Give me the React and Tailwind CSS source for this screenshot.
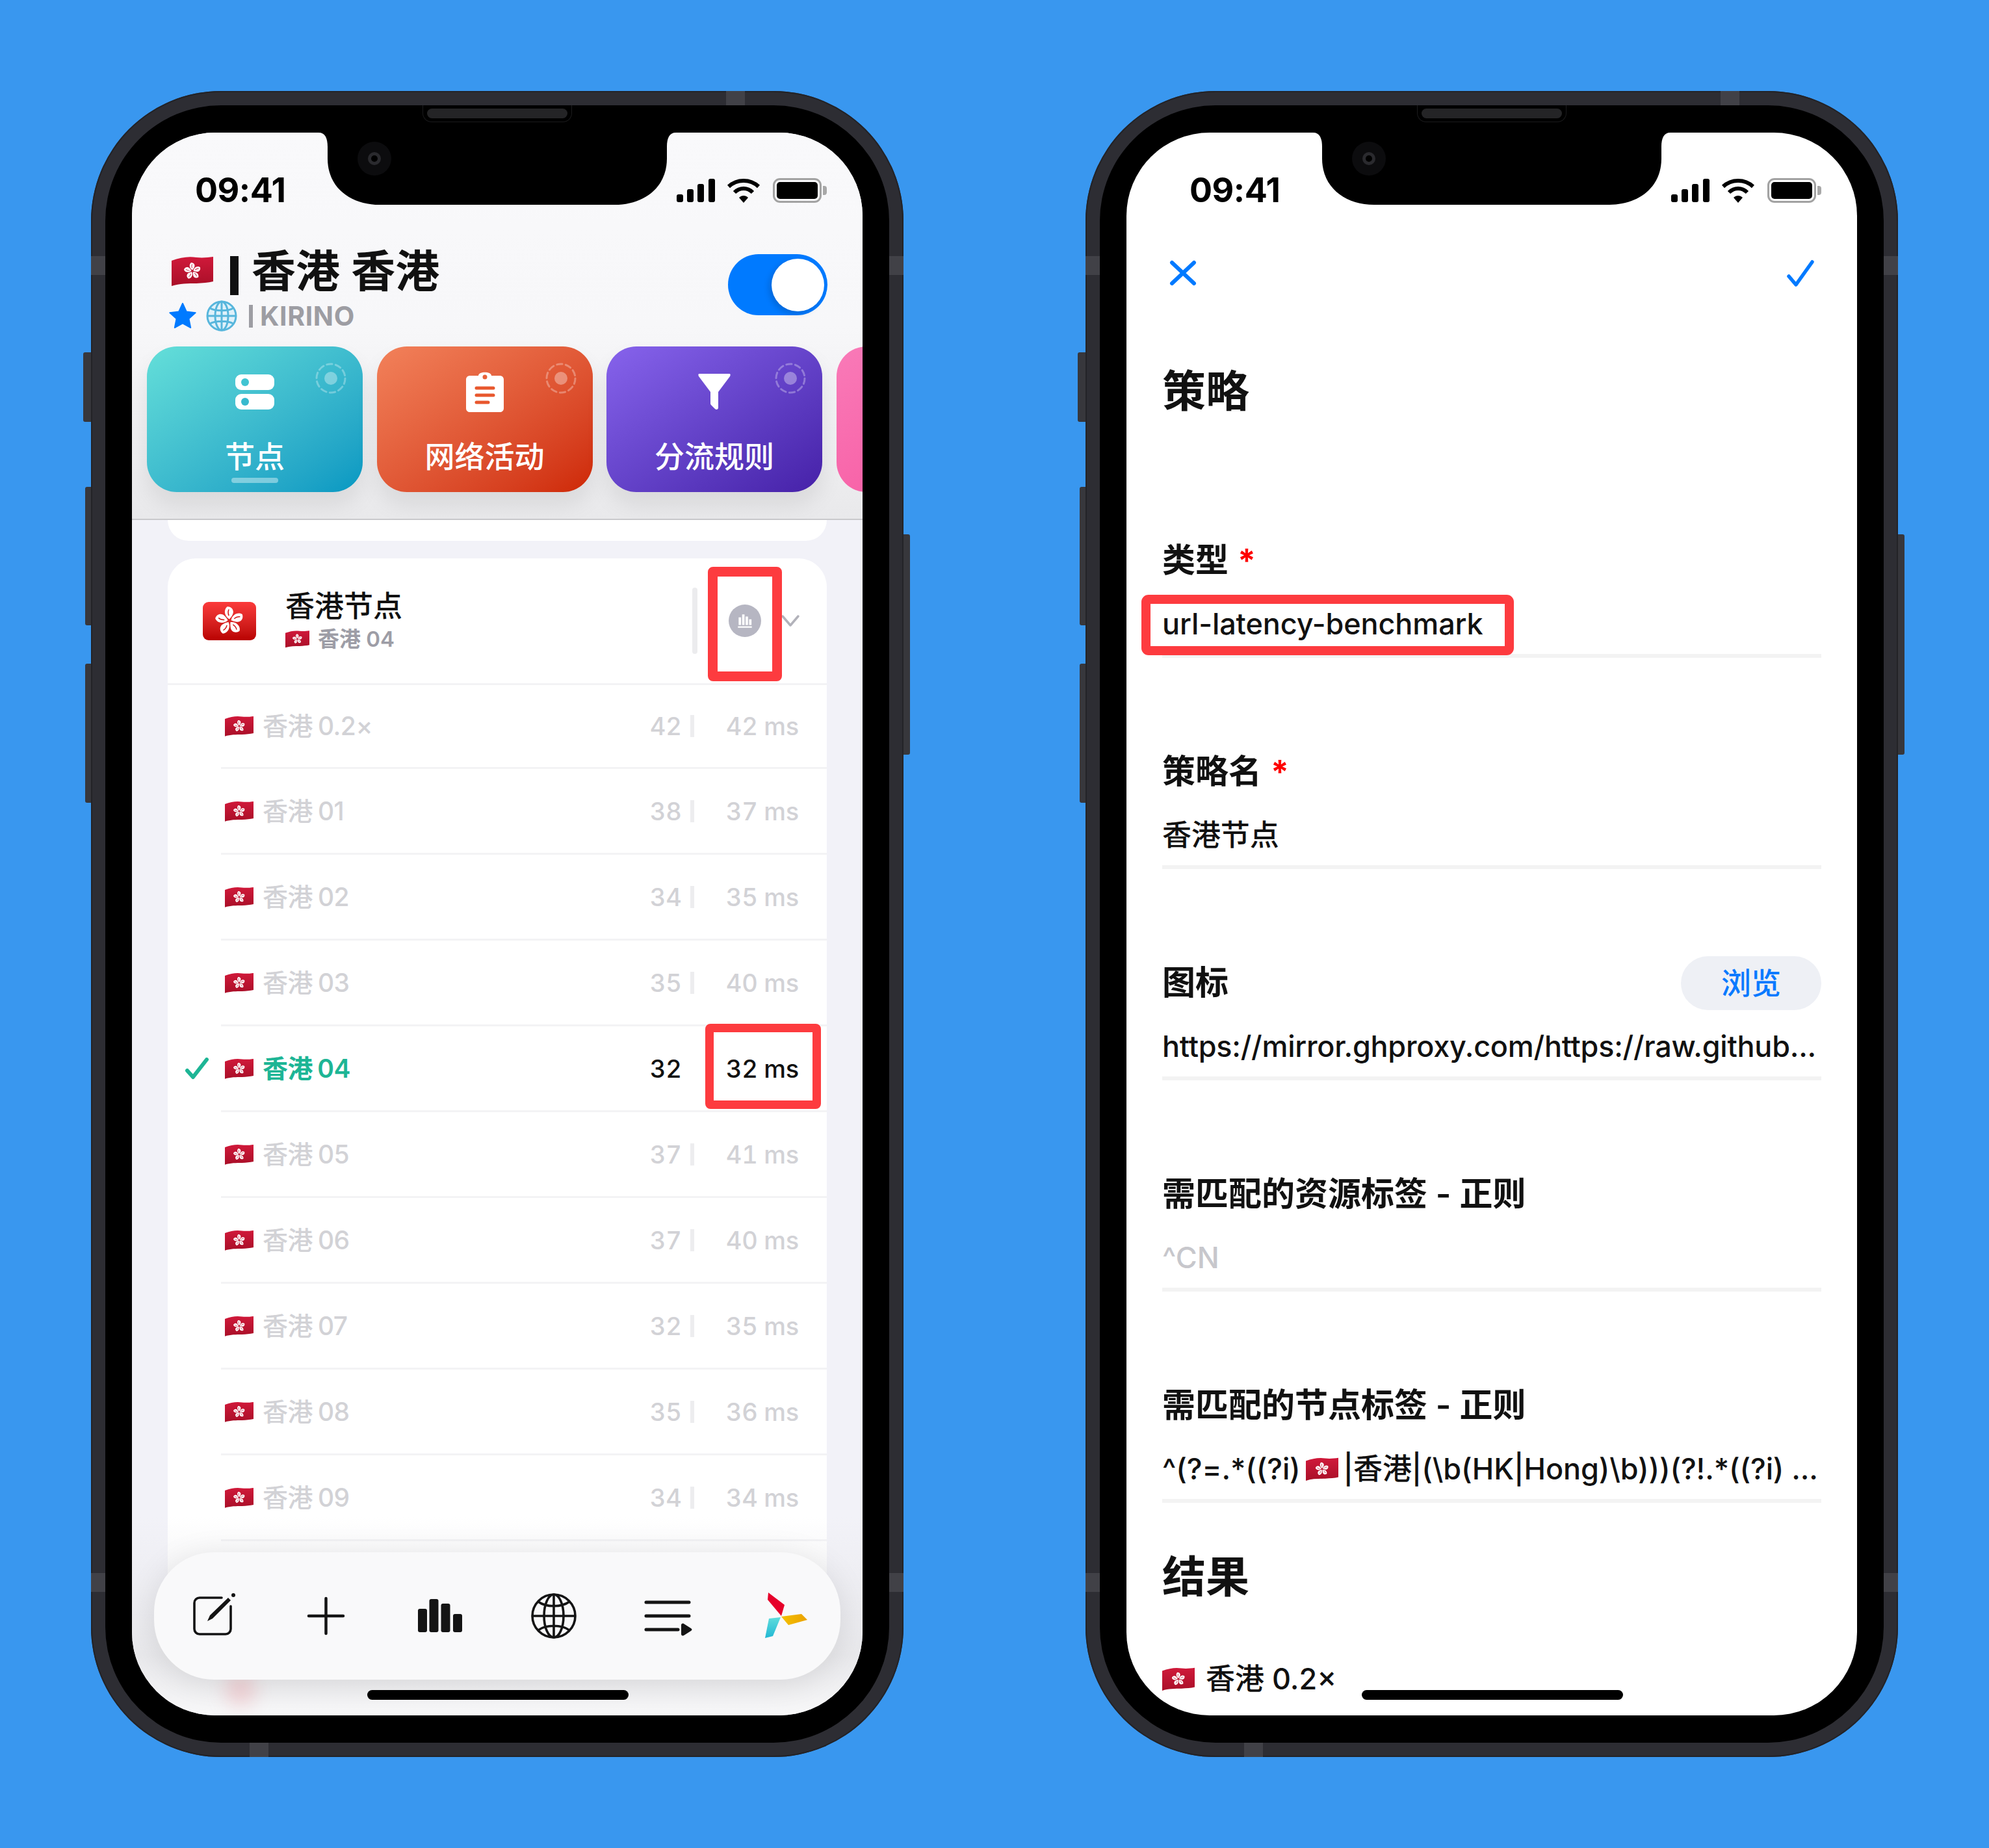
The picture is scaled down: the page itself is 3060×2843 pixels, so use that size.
import { useId } from 'react';

const ROWS = [
  ['香港 0.2×', 42, 42],
  ['香港 01', 38, 37],
  ['香港 02', 34, 35],
  ['香港 03', 35, 40],
  ['香港 04', 32, 32],
  ['香港 05', 37, 41],
  ['香港 06', 37, 40],
  ['香港 07', 32, 35],
  ['香港 08', 35, 36],
  ['香港 09', 34, 34],
  ['香港 10', 36, 38],
];

function Bauhinia({ cx, cy, r, mark = '#c21232' }) {
  return (
    <g transform={`translate(${cx} ${cy}) scale(${r / 10})`}>
      {[0, 72, 144, 216, 288].map(a => (
        <g key={a} transform={`rotate(${a})`}>
          <path d="M0 -1.200C-3.200 -2.800 -4.600 -7.400 -1.600 -10C1.600 -10.200 3.600 -7.200 2.300 -4.600C1.700 -3.200 0.800 -2.100 0 -1.200Z" fill="#fff" />
          <path d="M-0.400 -3.600Q-1.400 -6 -0.400 -8" fill="none" stroke={mark} strokeWidth="0.7" />
        </g>
      ))}
    </g>
  );
}

function Flag({ className }) {
  const id = useId();
  return (
    <svg viewBox="0 0 64 46" className={className}>
      <defs>
        <linearGradient id={id} x1="0" y1="0" x2="0" y2="1">
          <stop offset="0" stopColor="#d0193a" />
          <stop offset="1" stopColor="#a90f28" />
        </linearGradient>
      </defs>
      <path d="M0 7C14 2 26 0 38 2C48 3 56 2 64 1V39C56 41 48 41 38 42C26 42 12 42 0 46Z" fill={`url(#${id})`} />
      <Bauhinia cx={32} cy={23} r={13} />
    </svg>
  );
}

function StatusBar() {
  return (
    <div className="flex h-[38px] items-center justify-between pr-[55px] pl-[97px]">
      <span className="text-[52px] leading-[38px] font-bold tracking-[-0.5px] text-black">09:41</span>
      <div className="flex items-center">
        <svg viewBox="0 0 59 36" className="h-[36px] w-[59px]">
          <rect x="0" y="24" width="10" height="12" rx="3" />
          <rect x="16" y="16" width="10" height="20" rx="3" />
          <rect x="32" y="8" width="10" height="28" rx="3" />
          <rect x="49" y="0" width="10" height="36" rx="3" />
        </svg>
        <svg viewBox="0 0 52 37" className="ml-[18px] h-[37px] w-[52px]">
          <path d="M3 12C16 0 36 0 49 12" fill="none" stroke="#000" strokeWidth="6" />
          <path d="M12 21C20 13 32 13 40 21" fill="none" stroke="#000" strokeWidth="6" />
          <path d="M19 29C23 25 29 25 33 29L26 37Z" />
        </svg>
        <div className="ml-[19px] h-[38px] w-[75px] rounded-[11px] border-[3px] border-[#a2a2a2] p-[3px]">
          <div className="h-full w-full rounded-[5px] bg-black" />
        </div>
        <div className="ml-[2px] h-[14px] w-[6px] rounded-r-[4px] bg-[#a8a8a8]" />
      </div>
    </div>
  );
}

function Phone({ children }) {
  return (
    <div className="relative h-[2563px] w-[1250px] shrink-0 rounded-[200px] bg-[#2d2d33] p-[22px] shadow-[inset_0_0_0_2px_#232327]">
      {/* side buttons */}
      <div className="absolute top-[402px] -left-[12px] h-[107px] w-[12px] rounded-l-[3px] bg-[#37373c]" />
      <div className="absolute top-[609px] -left-[9px] h-[213px] w-[9px] rounded-l-[3px] bg-[#37373c]" />
      <div className="absolute top-[881px] -left-[9px] h-[214px] w-[9px] rounded-l-[3px] bg-[#37373c]" />
      <div className="absolute top-[682px] -right-[10px] h-[339px] w-[10px] rounded-r-[3px] bg-[#37373c]" />
      {/* antenna bands */}
      <div className="absolute top-0 left-[977px] h-[22px] w-[29px] bg-[#414147]" />
      <div className="absolute bottom-0 left-[244px] h-[22px] w-[29px] bg-[#414147]" />
      <div className="absolute top-[254px] left-0 h-[29px] w-[22px] bg-[#414147]" />
      <div className="absolute top-[254px] right-0 h-[29px] w-[22px] bg-[#414147]" />
      <div className="absolute top-[2280px] left-0 h-[29px] w-[22px] bg-[#414147]" />
      <div className="absolute top-[2280px] right-0 h-[29px] w-[22px] bg-[#414147]" />

      <div className="h-full w-full rounded-[178px] bg-black px-[41px] py-[42px]">
        <div className="relative h-[2435px] w-[1124px] overflow-hidden rounded-[128px] [font-family:Inter,'Noto_Sans_CJK_SC',sans-serif]">
          {children}
          <svg viewBox="0 0 550 111" className="absolute top-0 left-[287px] h-[111px] w-[550px]">
            <path d="M0 0H550C540 0 536 8 536 22V40C536 85 500 111 456 111H94C50 111 14 85 14 40V22C14 8 10 0 0 0Z" fill="#000" />
          </svg>
          <div className="absolute top-[2396px] left-[362px] h-[15px] w-[402px] rounded-[8px] bg-black" />
        </div>
      </div>

      {/* speaker and camera */}
      <div className="absolute top-[22px] left-[510px] flex h-[26px] w-[230px] justify-center rounded-b-[14px] border-x border-b border-[#1b1b1d] bg-black pt-[5px]">
        <div className="h-[15px] w-[216px] rounded-[8px] bg-[#242426]" />
      </div>
      <div className="absolute top-[78px] left-[410px] flex h-[52px] w-[52px] items-center justify-center rounded-full bg-[#0c0c0e]">
        <div className="h-[20px] w-[20px] rounded-full bg-[#2a2a2e] p-[5px]">
          <div className="h-[10px] w-[10px] rounded-full bg-black" />
        </div>
      </div>
    </div>
  );
}

function Target() {
  return (
    <svg viewBox="0 0 48 48" className="absolute top-[25px] right-[25px] h-[48px] w-[48px]">
      <circle cx="24" cy="24" r="22" fill="none" stroke="#fff" strokeOpacity="0.3" strokeWidth="3" strokeDasharray="8.5 5.3" strokeLinecap="round" />
      <circle cx="24" cy="24" r="10" fill="#fff" fillOpacity="0.35" />
    </svg>
  );
}

function ActionCard({ gradient, label, icon, active }) {
  return (
    <div className={`relative flex h-[224px] w-[332px] shrink-0 flex-col items-center rounded-[46px] shadow-[0_20px_34px_rgba(0,0,0,0.08)] ${gradient}`}>
      <Target />
      <div className="mt-[36px] flex h-[68px] items-center justify-center">{icon}</div>
      <div className="mt-[40px] text-[46px] leading-[50px] font-medium text-white">{label}</div>
      {active && <div className="mt-[8px] h-[8px] w-[72px] rounded-[4px] bg-white/40" />}
    </div>
  );
}

function ToolIcon({ children, className = '' }) {
  return (
    <svg viewBox="0 0 70 76" fill="none" className={`h-[76px] w-[70px] shrink-0 overflow-visible ${className}`}>
      {children}
    </svg>
  );
}

function Toolbar() {
  return (
    <div className="absolute top-[2184px] left-[34px] flex h-[196px] w-[1056px] items-center gap-[105px] rounded-[92px] bg-[#f9f9fa] pl-[58px] shadow-[0_8px_50px_rgba(0,0,0,0.1)]">
      <ToolIcon>
        <path d="M46 10H12a8 8 0 0 0-8 8V58a8 8 0 0 0 8 8H52a8 8 0 0 0 8-8V23" stroke="#141414" strokeWidth="3.6" strokeLinecap="round" />
        <path d="M24 46L28 37L56 10L60 14L32 42Z" fill="#141414" />
        <circle cx="64" cy="6" r="3" fill="#141414" />
      </ToolIcon>
      <ToolIcon>
        <path d="M5 38H58M31.500 11V65" stroke="#141414" strokeWidth="4.500" strokeLinecap="round" />
      </ToolIcon>
      <ToolIcon>
        <rect x="-2" y="27" width="14" height="36" rx="3" fill="#141414" />
        <rect x="15.500" y="12" width="14" height="51" rx="3" fill="#141414" />
        <rect x="33.500" y="19" width="14" height="44" rx="3" fill="#141414" />
        <rect x="52" y="35" width="14" height="28" rx="3" fill="#141414" />
      </ToolIcon>
      <ToolIcon>
        <g stroke="#141414" strokeWidth="3.6">
          <circle cx="32" cy="38" r="33" />
          <ellipse cx="32" cy="38" rx="15" ry="33" />
          <path d="M32 5V71M-1 38H65M8 16C20 25 44 25 56 16M8 60C20 51 44 51 56 60" />
        </g>
      </ToolIcon>
      <ToolIcon>
        <path d="M-1 17H65M-1 38H65M-1 59H48" stroke="#141414" strokeWidth="5" strokeLinecap="round" />
        <path d="M53 52C53 50 55 49 57 50L68 57C70 58 70 60 68 61L57 68C55 69 53 68 53 66Z" fill="#141414" />
      </ToolIcon>
      <svg viewBox="0 0 70 76" className="ml-[5px] h-[76px] w-[70px] shrink-0">
        <defs>
          <linearGradient id="logoY" x1="0" y1="0" x2="1" y2="0"><stop offset="0" stopColor="#f4c000" /><stop offset="1" stopColor="#eba200" /></linearGradient>
          <linearGradient id="logoC" x1="0" y1="0" x2="0" y2="1"><stop offset="0" stopColor="#5fdcdc" /><stop offset="1" stopColor="#22b8d4" /></linearGradient>
        </defs>
        <polygon points="7,2 6,13 27,38 32,21" fill="#e6002a" />
        <polygon points="27,39 58,35 67,44 38,52" fill="url(#logoY)" />
        <polygon points="8,42 26,40 14,69 2,72" fill="url(#logoC)" />
      </svg>
    </div>
  );
}

function NodeRow({ name, a, b, active, first }) {
  return (
    <>
      <div className={`relative flex items-center pr-[43px] ${first ? 'h-[126px]' : 'h-[129px]'}`}>
        <div className="ml-[27px] flex w-[36px] justify-center">
          {active && (
            <svg viewBox="0 0 36 34" className="h-[34px] w-[36px]">
              <path d="M3 20L12 30L33 3" fill="none" stroke="#1db595" strokeWidth="6" strokeLinecap="round" strokeLinejoin="round" />
            </svg>
          )}
        </div>
        <Flag className="ml-[25px] h-[32px] w-[44px] shrink-0" />
        <span className={`ml-[14px] flex-1 text-[39px] leading-[50px] tracking-[-0.5px] [word-spacing:-2px] ${active ? 'font-semibold text-[#1db595]' : 'font-medium text-[#d2d2d6]'}`}>{name}</span>
        <span className={`text-[38px] leading-[50px] font-medium tabular-nums ${active ? 'text-[#111]' : 'text-[#d2d2d6]'}`}>{a}</span>
        <div className={`ml-[13px] h-[34px] w-[6px] ${active ? 'bg-white' : 'bg-[#ededef]'}`} />
        <span className={`w-[161px] text-right text-[38px] leading-[50px] font-medium tracking-[-0.3px] tabular-nums ${active ? 'text-[#111]' : 'text-[#d2d2d6]'}`}>{b} ms</span>
        {active && <div className="absolute top-[-4px] left-[827px] h-[131px] w-[178px] rounded-[8px] border-[13px] border-[#fd3b3f]" />}
      </div>
      <div className="ml-[82px] h-[3px] bg-[#f3f3f5]" />
    </>
  );
}

function NodesScreen() {
  return (
    <div className="flex h-full flex-col bg-[#f2f2f8]">
      <header className="h-[596px] shrink-0 border-b-2 border-[#c9c9cc] bg-linear-to-b from-[#f9f9fb] via-[#f7f7f9] to-[#e9e9eb] pt-[70px]">
        <StatusBar />
        <div className="flex justify-between pr-[54px] pl-[61px]">
          <div>
            <div className="mt-[69px] flex h-[72px] items-center">
              <Flag className="h-[46px] w-[64px]" />
              <span className="ml-[26px] h-[60px] w-[13px] translate-y-[7px] bg-[#111]" />
              <span className="ml-[20px] text-[68px] leading-[72px] font-semibold text-[#111]">香港 香港</span>
            </div>
            <div className="-ml-[5px] mt-[10px] flex h-[46px] items-center">
              <svg viewBox="0 0 24 24" className="h-[44px] w-[44px]">
                <path d="M12 1.500L15.200 8.400L22.800 9.300L17.200 14.400L18.700 21.900L12 18.200L5.300 21.900L6.800 14.400L1.200 9.300L8.800 8.400Z" fill="#007aff" stroke="#007aff" strokeLinejoin="round" />
              </svg>
              <svg viewBox="0 0 48 48" className="ml-[14px] h-[48px] w-[48px]">
                <circle cx="24" cy="24" r="23" fill="#dff1fa" />
                <g fill="none" stroke="#57b6dc" strokeWidth="3">
                  <circle cx="24" cy="24" r="22" />
                  <ellipse cx="24" cy="24" rx="10" ry="22" />
                  <path d="M24 2V46M2 24H46M6 12C14 17 34 17 42 12M6 36C14 31 34 31 42 36" />
                </g>
              </svg>
              <span className="ml-[18px] h-[35px] w-[6px] bg-[#9d9da3]" />
              <span className="ml-[11px] text-[41px] leading-[46px] font-bold tracking-[0.6px] text-[#9d9da3]">KIRINO</span>
            </div>
          </div>
          <div className="mt-[79px] flex h-[94px] w-[153px] items-center justify-end rounded-full bg-[#007aff] pr-[5px]">
            <div className="h-[81px] w-[81px] rounded-full bg-white shadow-[-4px_4px_10px_rgba(0,0,0,0.15)]" />
          </div>
        </div>
        <div className="mt-[24px] flex gap-[21.5px] pl-[23px]">
          <ActionCard
            active
            label="节点"
            gradient="bg-linear-to-br from-[#64dfd9] to-[#0398c2]"
            icon={
              <svg viewBox="0 0 60 54" className="h-[54px] w-[60px]">
                <rect x="0" y="0" width="60" height="24" rx="9" fill="#fff" />
                <rect x="0" y="30" width="60" height="24" rx="9" fill="#fff" />
                <circle cx="15" cy="12" r="6" fill="#41c4d2" />
                <circle cx="15" cy="42" r="6" fill="#37b9ce" />
              </svg>
            }
          />
          <ActionCard
            label="网络活动"
            gradient="bg-linear-to-br from-[#f2815a] to-[#ce2703]"
            icon={
              <svg viewBox="0 0 58 62" className="h-[62px] w-[58px]">
                <path d="M6 6H19C19 -1 39 -1 39 6H52C55 6 58 8 58 12V56C58 60 55 62 52 62H6C3 62 0 60 0 56V12C0 8 3 6 6 6Z" fill="#fff" />
                <circle cx="29" cy="8" r="3.500" fill="#e8623a" />
                <path d="M16 25H42M16 36H42M16 47H34" stroke="#e8572d" strokeWidth="5" strokeLinecap="round" />
              </svg>
            }
          />
          <ActionCard
            label="分流规则"
            gradient="bg-linear-to-br from-[#8763ec] to-[#4620a8]"
            icon={
              <svg viewBox="0 0 50 56" className="h-[56px] w-[50px]">
                <path d="M2 0H48C50 0 50 2 49 4L31 28V52C31 55 28 56 26 54L20 48C19 47 19 46 19 45V28L1 4C0 2 0 0 2 0Z" fill="#fff" />
              </svg>
            }
          />
          <div className="h-[224px] w-[332px] shrink-0 rounded-[46px] bg-linear-to-br from-[#f97ab8] to-[#f64f9c]" />
        </div>
      </header>

      <div className="relative flex-1">
        <div className="mx-[55px] h-[32px] rounded-b-[40px] bg-white" />
        <div className="relative mx-[55px] mt-[27px] rounded-t-[44px] bg-white">
          <div className="flex h-[192px] items-center pr-[41px] pl-[54px]">
            <div className="flex h-[59px] w-[82px] shrink-0 items-center justify-center rounded-[9px] bg-linear-to-b from-[#fb3a3a] to-[#b90000]">
              <svg viewBox="0 0 40 40" className="h-[46px] w-[46px]"><Bauhinia cx={20} cy={20} r={19} mark="#d01515" /></svg>
            </div>
            <div className="ml-[45px] flex-1">
              <div className="text-[45px] leading-[52px] font-medium text-[#111]">香港节点</div>
              <div className="mt-[4px] flex h-[40px] items-center">
                <Flag className="h-[28px] w-[37px]" />
                <span className="ml-[13px] text-[33px] leading-[40px] font-semibold text-[#9d9da6]">香港 04</span>
              </div>
            </div>
            <div className="h-[102px] w-[8px] rounded-[4px] bg-[#ececee]" />
            <div className="ml-[48px] flex h-[50px] w-[50px] items-center justify-center rounded-full bg-[#b6b6c2]">
              <svg viewBox="0 0 28 28" className="h-[30px] w-[30px]">
                <path d="M5 9h3.500v11h-3.500zM10 5h3.500v15h-3.500zM15 8h3.500v12h-3.500zM20 12h3.500v8h-3.500zM4 22h20v2h-20z" fill="#fff" />
              </svg>
            </div>
            <svg viewBox="0 0 30 20" className="ml-[30px] h-[20px] w-[30px]">
              <path d="M3 3L15 17L27 3" fill="none" stroke="#b2b2ba" strokeWidth="3.500" strokeLinecap="round" strokeLinejoin="round" />
            </svg>
            <div className="absolute top-[13px] left-[831px] h-[176px] w-[114px] rounded-[8px] border-[15px] border-[#fd3b3f]" />
          </div>
          <div className="h-[3px] bg-[#f3f3f5]" />
          {ROWS.map((r, i) => (
            <NodeRow key={r[0]} name={r[0]} a={r[1]} b={r[2]} active={i === 4} first={i === 0} />
          ))}
        </div>
      </div>

      {/* fade under the toolbar */}
      <div className="absolute top-[2130px] left-0 h-[305px] w-full bg-linear-to-b from-transparent via-[#e9e9ec] via-70% to-[#f8f8f9]" />
      <div className="absolute top-[2370px] left-[145px] h-[50px] w-[44px] rounded-full bg-[#f0a0a8]/40 blur-[14px]" />
      <Toolbar />
    </div>
  );
}

function Field({ label, required, value, muted, action, boxed, first }) {
  return (
    <section className={first ? 'mt-[190px]' : 'mt-[145px]'}>
      <div className="flex h-[60px] items-center justify-between">
        <div className="text-[51px] leading-[60px] font-semibold text-[#111]">
          {label}
          {required && <span className="ml-[14px] text-[50px] font-bold text-[#fe0000]">*</span>}
        </div>
        {action}
      </div>
      <div className={`relative mt-[38px] h-[60px] text-[45px] leading-[60px] font-medium tracking-[-0.1px] whitespace-nowrap ${muted ? 'text-[#c7c7cc]' : 'text-[#111]'}`}>
        {value}
        {boxed && <div className="absolute top-[-15px] left-[-32px] h-[93px] w-[573px] rounded-[11px] border-[14px] border-[#fd3b3f]" />}
      </div>
      <div className="mt-[16px] h-[6px] bg-[#f3f3f3]" />
    </section>
  );
}

function PolicyScreen() {
  return (
    <div className="h-full bg-white pt-[70px]">
      <StatusBar />
      <div className="mt-[88px] flex justify-between px-[66px]">
        <svg viewBox="0 0 42 40" className="h-[40px] w-[42px]">
          <path d="M4 4L38 36M38 4L4 36" stroke="#007aff" strokeWidth="6" strokeLinecap="round" />
        </svg>
        <svg viewBox="0 0 42 42" className="h-[42px] w-[42px]">
          <path d="M3 25L14 38L39 3" fill="none" stroke="#007aff" strokeWidth="5.500" strokeLinecap="round" strokeLinejoin="round" />
        </svg>
      </div>
      <div className="px-[55px]">
        <h1 className="mt-[120px] h-[80px] text-[67px] leading-[80px] font-semibold text-[#111]">策略</h1>
        <Field first boxed required label="类型" value="url-latency-benchmark" />
        <Field required label="策略名" value="香港节点" />
        <Field
          label="图标"
          value={<span className="tracking-[-0.25px]">https://mirror.ghproxy.com/https://raw.github...</span>}
          action={
            <button className="-my-[12px] h-[83px] w-[216px] rounded-full bg-[#eef0f5] text-[46px] font-medium text-[#0a7aff]">浏览</button>
          }
        />
        <Field muted label="需匹配的资源标签 - 正则" value="^CN" />
        <Field
          label="需匹配的节点标签 - 正则"
          value={
            <span className="flex items-center">
              ^(?=.*((?i)
              <Flag className="mx-[8px] h-[36px] w-[50px] shrink-0" />
              |香港|(\b(HK|Hong)\b)))(?!.*((?i) ...
            </span>
          }
        />
        <h2 className="mt-[74px] h-[80px] text-[67px] leading-[80px] font-semibold text-[#111]">结果</h2>
        <div className="mt-[87px] flex h-[60px] items-center">
          <Flag className="h-[36px] w-[50px]" />
          <span className="ml-[17px] text-[45px] leading-[60px] font-medium text-[#111]">香港 0.2×</span>
        </div>
      </div>
    </div>
  );
}

export default function App() {
  return (
    <div className="flex h-[2843px] w-[3060px] gap-[280px] bg-[#3997ef] pt-[140px] pl-[140px]">
      <Phone><NodesScreen /></Phone>
      <Phone><PolicyScreen /></Phone>
    </div>
  );
}
